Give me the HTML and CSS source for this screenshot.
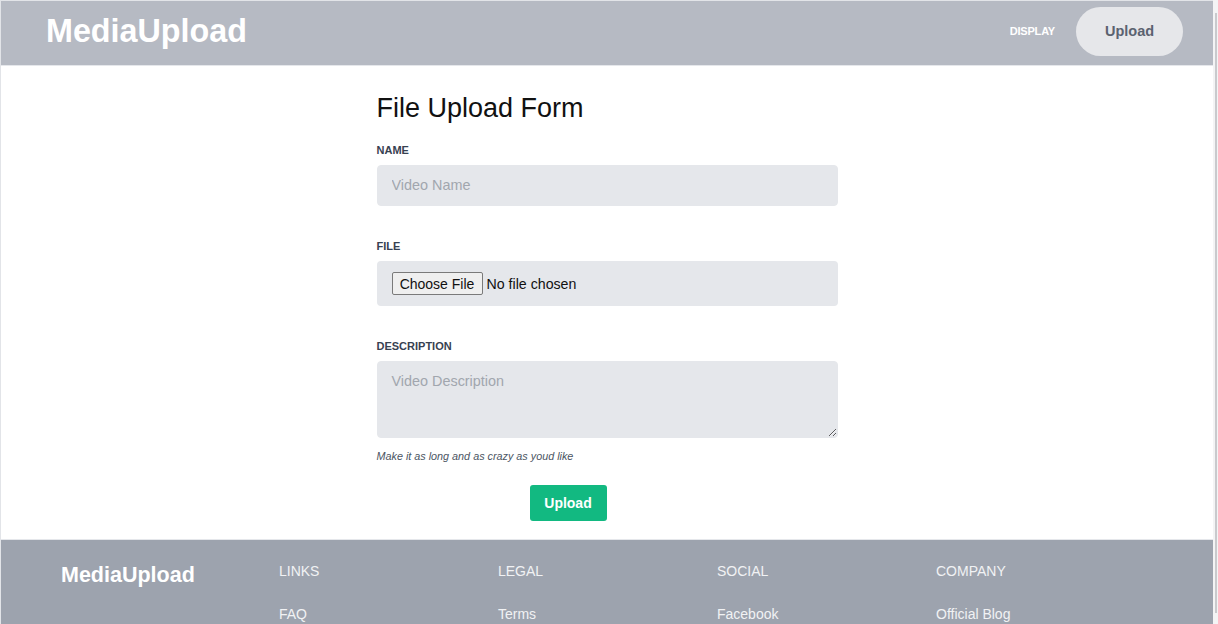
FILE: index.html
```html
<!DOCTYPE html>
<html lang="en">
<head>
<meta charset="utf-8">
<title>MediaUpload</title>
<link rel="stylesheet" href="styles.css">
</head>
<body>
<div class="window">
  <div class="page">
    <header class="topbar">
      <div class="brand">MediaUpload</div>
      <nav class="nav">
        <a class="nav-link" href="#">DISPLAY</a>
        <a class="nav-pill" href="#">Upload</a>
      </nav>
    </header>
    <main class="main">
      <form class="form">
        <h1 class="title">File Upload Form</h1>
        <label class="label label-first" for="name">NAME</label>
        <input class="field" id="name" type="text" placeholder="Video Name">
        <label class="label" for="file">FILE</label>
        <div class="filebox"><input class="file" id="file" type="file"></div>
        <label class="label" for="desc">DESCRIPTION</label>
        <textarea class="area" id="desc" placeholder="Video Description"></textarea>
        <p class="hint">Make it as long and as crazy as youd like</p>
        <button class="submit" type="button">Upload</button>
      </form>
    </main>
    <footer class="footer">
      <div class="foot-brand">MediaUpload</div>
      <div class="foot-col"><div class="foot-head">LINKS</div><a class="foot-link" href="#">FAQ</a></div>
      <div class="foot-col"><div class="foot-head">LEGAL</div><a class="foot-link" href="#">Terms</a></div>
      <div class="foot-col"><div class="foot-head">SOCIAL</div><a class="foot-link" href="#">Facebook</a></div>
      <div class="foot-col"><div class="foot-head">COMPANY</div><a class="foot-link" href="#">Official Blog</a></div>
    </footer>
  </div>
  <div class="scrollbar"><div class="thumb"></div></div>
</div>
</body>
</html>
```
FILE: styles.css
```css
* { box-sizing: border-box; }
html, body { margin: 0; padding: 0; height: 100%; overflow: hidden; }
body {
  font-family: "Liberation Sans", Arial, sans-serif;
  background: #ffffff;
  color: #111111;
}
.window {
  display: flex;
  height: 624px;
  width: 1218px;
}
.page {
  flex: 1;
  display: flex;
  flex-direction: column;
  border-top: 1px solid #e2e4e8;
  border-left: 1px solid #e2e4e8;
  overflow: hidden;
}
.scrollbar {
  width: 5px;
  background: #f4f4f5;
  padding-top: 13px;
  display: flex;
  justify-content: center;
}
.thumb {
  width: 2px;
  height: 600px;
  background: #c9cacd;
}
.topbar {
  height: 65px;
  flex: none;
  background: #b6bac3;
  border-bottom: 1px solid #e5e7eb;
  display: flex;
  align-items: center;
  justify-content: space-between;
  padding: 0 30px 4px 45px;
}
.brand {
  color: #ffffff;
  font-weight: 700;
  font-size: 32.3px;
  line-height: 37px;
}
.nav {
  display: flex;
  align-items: center;
  gap: 21px;
}
.nav-link {
  color: #ffffff;
  font-size: 11px;
  font-weight: 700;
  text-decoration: none;
  letter-spacing: -0.2px;
}
.nav-pill {
  width: 107px;
  height: 49px;
  border-radius: 25px;
  background: #e6e7ea;
  color: #5b6270;
  font-size: 14.5px;
  font-weight: 700;
  text-decoration: none;
  display: flex;
  align-items: center;
  justify-content: center;
}
.main {
  flex: none;
  height: 473px;
}
.form {
  width: 461px;
  margin: 0 auto;
  padding-top: 26px;
  display: flex;
  flex-direction: column;
  align-items: flex-start;
}
.title {
  margin: 0;
  font-weight: 400;
  font-size: 27px;
  line-height: 32px;
  color: #111111;
}
.label {
  display: block;
  font-size: 11px;
  line-height: 14px;
  font-weight: 700;
  color: #374151;
  margin-top: 33px;
  margin-bottom: 8px;
}
.label-first { margin-top: 19px; }
.field {
  width: 100%;
  height: 41px;
  border: 1px solid #e5e7eb;
  border-radius: 4px;
  background: #e5e7eb;
  padding: 0 14px 1px;
  font-family: "Liberation Sans", Arial, sans-serif;
  font-size: 14.4px;
  color: #374151;
  outline: none;
}
.field::placeholder, .area::placeholder { color: #a1a6ae; }
.filebox {
  width: 100%;
  height: 45px;
  border-radius: 4px;
  background: #e5e7eb;
  display: flex;
  align-items: center;
  padding: 0 15px;
}
.file {
  font-family: "Liberation Sans", Arial, sans-serif;
  font-size: 14.2px;
  color: #111111;
}
.file::file-selector-button {
  font-family: "Liberation Sans", Arial, sans-serif;
  font-size: 14px;
  height: 23px;
  width: 91px;
  padding: 0;
  margin-right: 4px;
  border: 1px solid #7a7a7a;
  border-radius: 2px;
  background: #efefef;
  color: #111111;
}
.area {
  display: block;
  width: 100%;
  height: 77px;
  border: 1px solid #e5e7eb;
  border-radius: 4px;
  background: #e5e7eb;
  padding: 11px 14px;
  font-family: "Liberation Sans", Arial, sans-serif;
  font-size: 14.4px;
  color: #374151;
  outline: none;
}
.hint {
  margin: 11px 0 0;
  font-size: 10.8px;
  line-height: 14px;
  font-style: italic;
  color: #4b5563;
}
.submit {
  margin: 22px 0 0 153px;
  width: 77px;
  height: 36px;
  border: none;
  border-radius: 3px;
  background: #12b981;
  color: #ffffff;
  font-family: "Liberation Sans", Arial, sans-serif;
  font-size: 14px;
  font-weight: 700;
}
.footer {
  flex: 1;
  background: #9da3ae;
  border-top: 1px solid #e5e7eb;
  display: grid;
  grid-template-columns: 218px 219px 219px 219px 1fr;
  padding: 23px 0 0 60px;
  align-items: start;
}
.foot-brand {
  color: #ffffff;
  font-size: 21.5px;
  font-weight: 700;
  line-height: 24px;
}
.foot-col {
  display: flex;
  flex-direction: column;
  gap: 27px;
}
.foot-head, .foot-link {
  color: #f1f2f4;
  font-size: 14px;
  line-height: 16px;
  text-decoration: none;
}
.foot-col:last-child { grid-column: 5; }
```
